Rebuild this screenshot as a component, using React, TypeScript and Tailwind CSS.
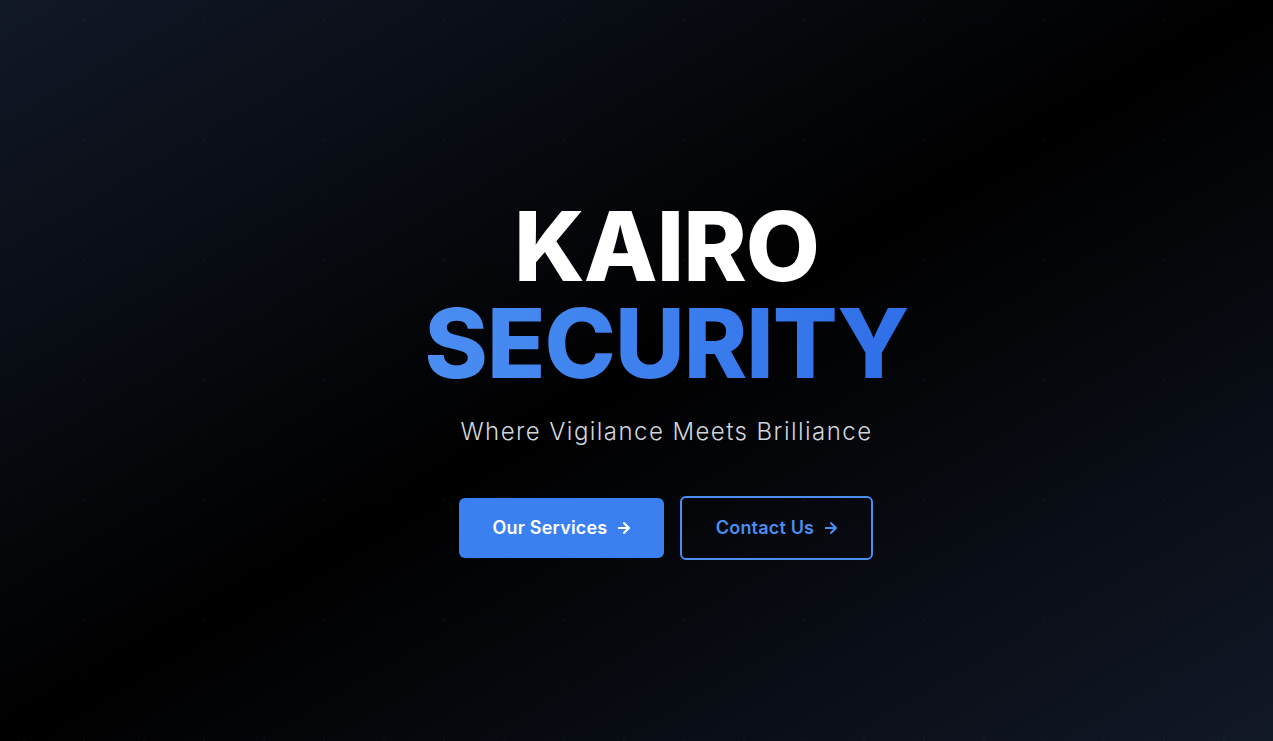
import { FaArrowRight } from "react-icons/fa";

export default function App() {
  return (
    <main
      className="relative min-h-screen w-full overflow-hidden bg-[linear-gradient(to_bottom_right,#111827,#000000,#111827)]"
      style={{ fontFamily: "Inter, 'Noto Sans', sans-serif" }}
    >
      {/* dot grid */}
      <div className="absolute inset-0 bg-[radial-gradient(circle,rgba(96,130,200,0.06)_1.2px,transparent_1.5px)] bg-[size:60px_60px] bg-[position:-6px_-10px]"></div>

      {/* HERO */}
      <section className="relative flex min-h-screen items-center justify-center pl-[60px] pt-4">
        <div className="flex flex-col items-center text-center">
          <h1 className="text-[96px] font-extrabold leading-[97px] tracking-[-0.01em]">
            <span className="block text-white">KAIRO</span>
            <span className="block bg-linear-to-r from-[#4a8ef2] to-[#2f6fe8] bg-clip-text text-transparent">
              SECURITY
            </span>
          </h1>

          <p className="mt-6 text-2xl font-light tracking-[0.06em] text-gray-300">
            Where Vigilance Meets Brilliance
          </p>

          <div className="mt-12 flex items-center gap-4">
            <button className="flex h-[60px] w-[205px] items-center justify-center gap-2.5 rounded-md bg-[#3b80f0] text-lg font-semibold tracking-[0.01em] text-white">
              Our Services <FaArrowRight className="text-sm" />
            </button>
            <button className="flex h-[64px] w-[193px] items-center justify-center gap-2.5 rounded-md border-2 border-[#4a8ef2] text-lg font-semibold tracking-[0.01em] text-[#4a8ef2]">
              Contact Us <FaArrowRight className="text-sm" />
            </button>
          </div>
        </div>
      </section>
    </main>
  );
}
